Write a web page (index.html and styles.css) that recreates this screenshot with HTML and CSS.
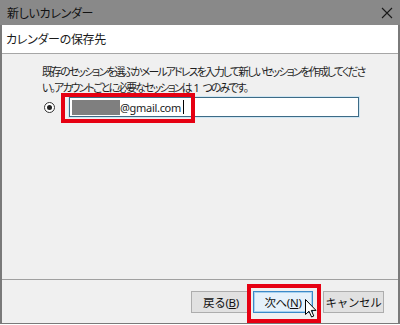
FILE: index.html
```html
<!DOCTYPE html>
<html lang="ja">
<head>
<meta charset="utf-8">
<link rel="stylesheet" href="styles.css">
</head>
<body>
<div class="dialog">
  <div class="titlebar">
    <span class="title">新しいカレンダー</span>
    <svg class="close" width="12" height="12" viewBox="0 0 12 12"><path d="M1 1L11 11M11 1L1 11" stroke="#1a1a1a" stroke-width="1.1" fill="none"/></svg>
  </div>
  <div class="header">カレンダーの保存先</div>
  <div class="content">
    <p class="desc">既存のセッションを選ぶかメールアドレスを入力して新しいセッションを作成してくださ<br>い。アカウントごとに必要なセッションは<span class="sp"> 1 </span>つのみです。</p>
    <div class="row">
      <span class="radio"><span class="dot"></span></span>
      <div class="field"><span class="redact"></span><span class="mail">@gmail.com</span><span class="caret"></span></div>
    </div>
    <div class="mark mark-input"></div>
  </div>
  <div class="footer">
    <button class="btn">戻る(<u>B</u>)</button>
    <button class="btn btn-primary">次へ(<u>N</u>)</button>
    <button class="btn btn-cancel">キャンセル</button>
    <div class="mark mark-next"></div>
    <svg class="cursor" width="12" height="19" viewBox="0 0 12 19"><path d="M0.5 0.5V15.5L4 12.2L6.6 18L8.8 17L6.3 11.4H11Z" fill="#fff" stroke="#000" stroke-width="1"/></svg>
  </div>
</div>
</body>
</html>
```
FILE: styles.css
```css
* { box-sizing: border-box; }
html, body { margin: 0; padding: 0; }
body {
  width: 400px;
  height: 325px;
  overflow: hidden;
  font-family: "Noto Sans", "Noto Sans CJK JP", sans-serif;
  font-feature-settings: "palt";
  font-size: 12px;
  color: #1a1a1a;
  background: #fff;
}
.dialog {
  width: 400px;
  height: 324px;
  border: 1px solid #7a7a7a;
  border-left-width: 2px;
  border-right-width: 2px;
  border-top: none;
  display: flex;
  flex-direction: column;
  position: relative;
}
.titlebar {
  height: 25px;
  background: #898989;
  display: flex;
  align-items: center;
  justify-content: space-between;
  padding: 0 6px 0 7px;
  margin: 0 -2px;
}
.title { font-size: 12px; letter-spacing: -0.3px; color: #111; }
.close { margin-right: 1px; margin-top: 1px; }
.header {
  height: 29px;
  background: #fff;
  border-bottom: 1px solid #a6a6a6;
  padding: 0 0 0 4px;
  display: flex;
  align-items: center;
  font-size: 12px;
  letter-spacing: -0.3px;
}
.content {
  flex: 1;
  background: #f0f0f0;
  position: relative;
  padding: 10px 0 0 40px;
}
.desc {
  margin: 0;
  font-size: 10.8px;
  line-height: 16px;
  letter-spacing: -1.75px;
  white-space: nowrap;
  color: #1e1e1e;
}
.sp { letter-spacing: 0; }
.row {
  display: flex;
  align-items: center;
  margin-top: 1px;
  margin-left: 2px;
}
.radio {
  width: 11px;
  height: 11px;
  border: 1px solid #333;
  border-radius: 50%;
  background: #fff;
  display: flex;
  align-items: center;
  justify-content: center;
}
.dot { width: 5px; height: 5px; border-radius: 50%; background: #222; }
.field {
  margin-left: 14px;
  width: 290px;
  height: 20px;
  border: 1px solid #3d6b86;
  box-shadow: 0 0 0 1px #cfe6f3;
  background: #fff;
  display: flex;
  align-items: center;
  padding-left: 2px;
}
.redact { width: 48px; height: 15px; background: #7f7f7f; }
.mail { font-size: 11px; color: #222; letter-spacing: -0.3px; }
.caret { width: 1px; height: 14px; background: #000; margin-left: 2px; }
.footer {
  height: 44px;
  background: #f0f0f0;
  border-top: 1px solid #a0a0a0;
  display: flex;
  align-items: flex-start;
  justify-content: flex-end;
  padding: 11px 14px 0 0;
  position: relative;
}
.btn {
  width: 60px;
  height: 22px;
  font-family: inherit;
  font-size: 11.5px;
  letter-spacing: -0.3px;
  color: #111;
  background: #e1e1e1;
  border: 1px solid #adadad;
  padding: 0;
}
.btn u { text-decoration: underline; }
.btn-primary {
  margin-left: 2px;
  background: #e5f1fb;
  border: 1px solid #3b89c8;
  box-shadow: inset 0 0 0 1px #a8d2f0;
}
.btn-cancel { width: 61px; margin-left: 10px; }
.mark {
  position: absolute;
  border: 4px solid #e60012;
}
.mark-input { left: 59px; top: 39px; width: 134px; height: 30px; }
.mark-next { left: 245px; top: 4px; width: 74px; height: 39px; }
.cursor { position: absolute; left: 303px; top: 19px; }
```
